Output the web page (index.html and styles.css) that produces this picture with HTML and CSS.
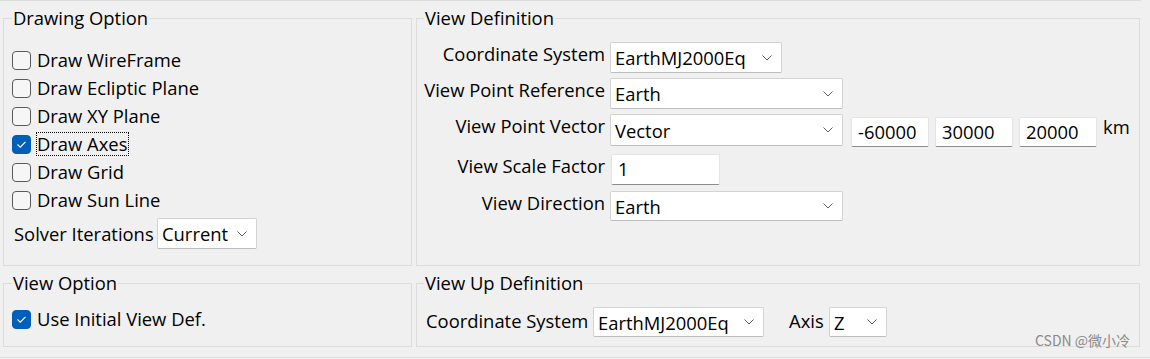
FILE: index.html
```html
<!DOCTYPE html>
<html>
<head>
<meta charset="utf-8">
<link rel="stylesheet" href="styles.css">
</head>
<body>
<div class="top-rule"></div>
<div class="panel">
  <fieldset class="group g-draw">
    <legend>Drawing Option</legend>
    <div class="draw-body">
      <div class="check-row"><span class="box"></span><span class="lbl">Draw WireFrame</span></div>
      <div class="check-row"><span class="box"></span><span class="lbl">Draw Ecliptic Plane</span></div>
      <div class="check-row"><span class="box"></span><span class="lbl">Draw XY Plane</span></div>
      <div class="check-row"><span class="box on"><svg width="19" height="19" viewBox="0 0 19 19"><polyline points="5.5,9.5 8.2,12.2 13.5,6.8" fill="none" stroke="#fff" stroke-width="1.1"/></svg></span><span class="lbl focus">Draw Axes</span></div>
      <div class="check-row"><span class="box"></span><span class="lbl">Draw Grid</span></div>
      <div class="check-row"><span class="box"></span><span class="lbl">Draw Sun Line</span></div>
      <div class="solver-row">
        <span class="solver-lbl">Solver Iterations</span>
        <div class="combo w-solver"><span>Current</span><svg class="chev" width="10" height="6" viewBox="0 0 10 6"><polyline points="0.5,0.5 5,5 9.5,0.5" fill="none" stroke="#606060" stroke-width="1"/></svg></div>
      </div>
    </div>
  </fieldset>

  <fieldset class="group g-def">
    <legend>View Definition</legend>
    <div class="def-body">
      <div class="def-row r1">
        <span class="def-lbl">Coordinate System</span>
        <div class="combo w-cs"><span>EarthMJ2000Eq</span><svg class="chev" width="10" height="6" viewBox="0 0 10 6"><polyline points="0.5,0.5 5,5 9.5,0.5" fill="none" stroke="#606060" stroke-width="1"/></svg></div>
      </div>
      <div class="def-row r2">
        <span class="def-lbl">View Point Reference</span>
        <div class="combo w-wide"><span>Earth</span><svg class="chev" width="10" height="6" viewBox="0 0 10 6"><polyline points="0.5,0.5 5,5 9.5,0.5" fill="none" stroke="#606060" stroke-width="1"/></svg></div>
      </div>
      <div class="def-row r3">
        <span class="def-lbl">View Point Vector</span>
        <div class="combo w-wide h32"><span>Vector</span><svg class="chev" width="10" height="6" viewBox="0 0 10 6"><polyline points="0.5,0.5 5,5 9.5,0.5" fill="none" stroke="#606060" stroke-width="1"/></svg></div>
        <div class="field w-num first">-60000</div>
        <div class="field w-num">30000</div>
        <div class="field w-num">20000</div>
        <span class="unit">km</span>
      </div>
      <div class="def-row r4">
        <span class="def-lbl">View Scale Factor</span>
        <div class="field w-scale">1</div>
      </div>
      <div class="def-row r5">
        <span class="def-lbl">View Direction</span>
        <div class="combo w-wide h30"><span>Earth</span><svg class="chev" width="10" height="6" viewBox="0 0 10 6"><polyline points="0.5,0.5 5,5 9.5,0.5" fill="none" stroke="#606060" stroke-width="1"/></svg></div>
      </div>
    </div>
  </fieldset>

  <fieldset class="group g-vopt">
    <legend>View Option</legend>
    <div class="vopt-body">
      <div class="check-row"><span class="box on"><svg width="19" height="19" viewBox="0 0 19 19"><polyline points="5.5,9.5 8.2,12.2 13.5,6.8" fill="none" stroke="#fff" stroke-width="1.1"/></svg></span><span class="lbl">Use Initial View Def.</span></div>
    </div>
  </fieldset>

  <fieldset class="group g-up">
    <legend>View Up Definition</legend>
    <div class="up-body">
      <span class="up-lbl">Coordinate System</span>
      <div class="combo w-upcs h30"><span>EarthMJ2000Eq</span><svg class="chev" width="10" height="6" viewBox="0 0 10 6"><polyline points="0.5,0.5 5,5 9.5,0.5" fill="none" stroke="#606060" stroke-width="1"/></svg></div>
      <span class="axis-lbl">Axis</span>
      <div class="combo w-axis h30"><span>Z</span><svg class="chev" width="10" height="6" viewBox="0 0 10 6"><polyline points="0.5,0.5 5,5 9.5,0.5" fill="none" stroke="#606060" stroke-width="1"/></svg></div>
    </div>
  </fieldset>
</div>
<div class="watermark">CSDN @微小冷</div>
</body>
</html>
```

FILE: styles.css
```css
html, body {
  margin: 0;
  padding: 0;
}
body {
  background: #f0f0f0;
  font-family: "Open Sans", "Noto Sans", sans-serif;
  font-size: 18.4px;
  color: #000;
  width: 1150px;
  height: 359px;
  overflow: hidden;
  position: relative;
}
.top-rule {
  width: 1141px;
  height: 1px;
  background: #dcdcdc;
}
.panel {
  display: grid;
  grid-template-columns: 409px 724px;
  grid-template-rows: 260px 76px;
  column-gap: 4px;
  row-gap: 5px;
  padding: 5px 0 10px 3px;
  border-bottom: 1px solid #dcdcdc;
}
.group {
  margin: 0;
  padding: 0;
  min-width: 0;
  box-sizing: border-box;
  border: 1px solid #dcdcdc;
}
.group legend {
  height: 24px;
  line-height: 24px;
  padding: 0 1px;
  margin-left: 8px;
}
.g-def legend, .g-up legend {
  margin-left: 7px;
}

/* checkboxes */
.draw-body {
  padding-top: 16px;
}
.check-row {
  display: flex;
  align-items: center;
  height: 28px;
  padding-left: 8px;
  gap: 5px;
}
.box {
  width: 19px;
  height: 19px;
  box-sizing: border-box;
  border: 1px solid #5a5a5a;
  border-radius: 4px;
  background: #f6f6f6;
  flex: none;
  position: relative;
}
.box.on {
  background: #005fb8;
  border-color: #005fb8;
}
.box.on svg {
  position: absolute;
  left: -1px;
  top: -1px;
}
.lbl {
  line-height: 22px;
  border: 1px dotted transparent;
  padding-right: 1px;
}
.lbl.focus {
  border-color: #000;
}

.solver-row {
  display: flex;
  align-items: center;
  margin-top: 4px;
  height: 31px;
  padding-left: 10px;
}
.solver-lbl {
  width: 143px;
  flex: none;
  white-space: nowrap;
}

/* combos and fields */
.combo {
  display: flex;
  align-items: center;
  justify-content: space-between;
  box-sizing: border-box;
  height: 31px;
  padding: 0 9px 0 4px;
  background: #fff;
  border: 1px solid #d3d3d3;
  border-bottom-color: #bdbdbd;
  border-radius: 2px;
  flex: none;
  white-space: nowrap;
}
.combo .chev {
  flex: none;
}
.h32 { height: 32px; }
.h30 { height: 30px; }
.w-solver { width: 100px; }
.w-cs { width: 172px; }
.w-wide { width: 233px; }
.w-upcs { width: 171px; }
.w-axis { width: 58px; }

.field {
  box-sizing: border-box;
  height: 30px;
  line-height: 28px;
  padding-left: 6px;
  background: #fff;
  border: 1px solid #e4e4e4;
  border-bottom-color: #8c8c8c;
  border-radius: 2px;
  flex: none;
}
.w-num { width: 78px; margin-left: 6px; margin-top: 3px; }
.w-num.first { margin-left: 8px; }
.w-scale { width: 109px; height: 31px; margin-left: 1px; }

/* view definition */
.def-body {
  padding-top: 12px;
}
.def-row {
  display: flex;
  align-items: flex-start;
}
.def-lbl {
  width: 188px;
  margin-right: 5px;
  text-align: right;
  line-height: 24px;
  white-space: nowrap;
  flex: none;
}
.r2, .r3 { margin-top: 5px; }
.r4 { margin-top: 7px; }
.r5 { margin-top: 6px; }
.unit {
  margin-left: 6px;
  line-height: 24px;
  margin-top: 1px;
}

/* view option */
.vopt-body {
  padding-top: 10px;
}

/* view up */
.up-body {
  display: flex;
  align-items: center;
  margin-top: 12px;
  height: 30px;
  padding-left: 9px;
}
.up-lbl {
  width: 162px;
  margin-right: 5px;
  margin-bottom: 3px;
  flex: none;
  white-space: nowrap;
}
.axis-lbl {
  width: 35px;
  margin-left: 25px;
  margin-right: 5px;
  margin-bottom: 3px;
  flex: none;
}

.watermark {
  position: absolute;
  left: 1035px;
  top: 331px;
  font-family: "Noto Sans CJK SC", "Noto Sans", sans-serif;
  font-size: 14px;
  line-height: 18px;
  color: #8a8a8a;
  white-space: nowrap;
}
```
